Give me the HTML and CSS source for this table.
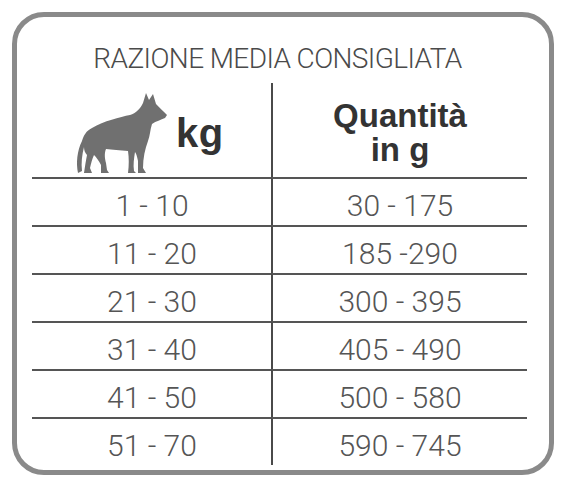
FILE: index.html
```html
<!DOCTYPE html>
<html lang="it">
<head>
<meta charset="utf-8">
<title>Razione media consigliata</title>
<link rel="stylesheet" href="styles.css">
</head>
<body>
<div class="card">
  <div class="title">RAZIONE MEDIA CONSIGLIATA</div>
  <div class="table">
    <div class="cell head left">
      <svg class="dog" width="96" height="86" viewBox="72 86 96 86" aria-hidden="true">
        <path fill="#707070" d="M146 90 L149 97 L153 91 L156 101 C159 104 163 108 167 112 L165 115
          C161 117 156 118 152 121 C150 127 150 133 148 138 C145 146 143 155 143 165 L146 170 L138 170
          L138 158 C137 153 136 150 135 149 C134 155 133 162 134 168 L136 170 L128 170
          C129 162 129 155 128 148 C120 147 112 147 106 146 C104 151 105 156 106 160 L107 167 L109 170
          L101 170 L101 162 C99 158 96 154 94 152 C92 156 91 161 90 165 L92 170 L84 170
          C85 163 86 157 87 152 C85 150 84 147 84 144 C82 152 81 160 82 168 L78 170
          C76 160 77 148 82 138 C84 132 86 128 92 125 C104 118 120 114 130 112
          C136 110 140 106 143 100 Z"/>
      </svg>
      <span class="kg">kg</span>
    </div>
    <div class="cell head right">
      <div class="q">
        <div class="q-line">Quantità</div>
        <div class="q-line">in g</div>
      </div>
    </div>
    <div class="cell row left">1 - 10</div><div class="cell row right">30 - 175</div>
    <div class="cell row left">11 - 20</div><div class="cell row right">185 -290</div>
    <div class="cell row left">21 - 30</div><div class="cell row right">300 - 395</div>
    <div class="cell row left">31 - 40</div><div class="cell row right">405 - 490</div>
    <div class="cell row left">41 - 50</div><div class="cell row right">500 - 580</div>
    <div class="cell row left">51 - 70</div><div class="cell row right">590 - 745</div>
  </div>
</div>
</body>
</html>
```
FILE: styles.css
```css
html, body {
  margin: 0;
  padding: 0;
  background: #ffffff;
}
body {
  width: 566px;
  height: 489px;
  overflow: hidden;
}
.card {
  box-sizing: border-box;
  margin: 12px 0 0 12px;
  width: 542px;
  height: 463px;
  border: 5px solid #8a8a8a;
  border-radius: 32px;
  padding: 28px 22px 0 15px;
}
.title {
  font-family: Roboto, "Liberation Sans", sans-serif;
  font-weight: 300;
  font-size: 28px;
  line-height: 28px;
  letter-spacing: -0.6px;
  color: #4a4a4a;
  text-align: center;
  margin-bottom: 10px;
  padding-right: 4px;
}
.table {
  display: grid;
  grid-template-columns: 240px 255px;
  grid-template-rows: 94px repeat(6, 48px);
}
.cell {
  display: flex;
  align-items: center;
  justify-content: center;
  font-family: Roboto, "Liberation Sans", sans-serif;
  font-weight: 300;
  font-size: 30px;
  color: #555555;
}
.cell.right {
  border-left: 2px solid #4a4a4a;
  margin-left: -1px;
}
.cell.row {
  border-top: 2px solid #555555;
  box-sizing: border-box;
  padding-top: 6px;
}
.cell.head.left {
  justify-content: flex-start;
  padding-left: 40px;
  gap: 8px;
}
.dog {
  display: block;
  margin-top: 4px;
}
.kg {
  font-family: "Liberation Sans", Arial, sans-serif;
  font-weight: 700;
  font-size: 40px;
  color: #333333;
  letter-spacing: 0.5px;
  margin-top: 6px;
}
.q {
  font-family: "Liberation Sans", Arial, sans-serif;
  font-weight: 700;
  font-size: 33px;
  line-height: 34px;
  color: #333333;
  text-align: center;
  margin-top: 6px;
}
.q-line {
  white-space: nowrap;
}
```
